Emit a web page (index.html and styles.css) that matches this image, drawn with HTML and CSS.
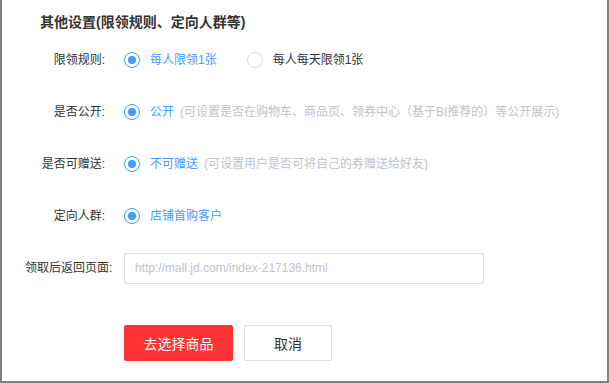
FILE: index.html
```html
<!DOCTYPE html>
<html lang="zh-CN">
<head>
<meta charset="utf-8">
<title>其他设置</title>
<link rel="stylesheet" href="styles.css">
</head>
<body>
<div class="frame">
  <h2 class="title">其他设置(限领规则、定向人群等)</h2>

  <div class="row">
    <div class="label">限领规则:</div>
    <div class="field">
      <span class="opt"><span class="radio on"></span><span class="opt-text on">每人限领1张</span></span>
      <span class="opt opt-next"><span class="radio"></span><span class="opt-text">每人每天限领1张</span></span>
    </div>
  </div>

  <div class="row">
    <div class="label">是否公开:</div>
    <div class="field">
      <span class="opt"><span class="radio on"></span><span class="opt-text on">公开</span></span>
      <span class="hint">(可设置是否在购物车、商品页、领券中心（基于BI推荐的）等公开展示)</span>
    </div>
  </div>

  <div class="row">
    <div class="label">是否可赠送:</div>
    <div class="field">
      <span class="opt"><span class="radio on"></span><span class="opt-text on">不可赠送</span></span>
      <span class="hint">(可设置用户是否可将自己的券赠送给好友)</span>
    </div>
  </div>

  <div class="row">
    <div class="label">定向人群:</div>
    <div class="field">
      <span class="opt"><span class="radio on"></span><span class="opt-text on">店铺首购客户</span></span>
    </div>
  </div>

  <div class="row">
    <div class="label">领取后返回页面:</div>
    <div class="field">
      <input class="input" type="text" placeholder="http://mall.jd.com/index-217136.html">
    </div>
  </div>

  <div class="actions">
    <button class="btn btn-primary" type="button">去选择商品</button>
    <button class="btn btn-default" type="button">取消</button>
  </div>
</div>
</body>
</html>
```

FILE: styles.css
```css
html, body {
  margin: 0;
  padding: 0;
  background: #ffffff;
}

body {
  font-family: "Liberation Sans", "Noto Sans CJK SC", sans-serif;
  font-size: 12px;
  color: #333333;
}

.frame {
  width: 609px;
  height: 383px;
  box-sizing: border-box;
  border-left: 2px solid #808080;
  border-right: 2px solid #808080;
  border-bottom: 2px solid #808080;
  overflow: hidden;
}

.title {
  margin: 12px 0 0 38px;
  font-size: 14px;
  font-weight: bold;
  line-height: 20px;
  color: #333333;
}

.row {
  display: flex;
  align-items: center;
  height: 32px;
  margin-top: 20px;
}

.title + .row {
  margin-top: 12px;
}

.label {
  width: 80px;
  margin-left: 23px;
  margin-right: 19px;
  flex: none;
  text-align: right;
  white-space: nowrap;
  line-height: 20px;
  color: #333333;
}

.field {
  display: flex;
  align-items: center;
  white-space: nowrap;
}

.opt {
  display: inline-flex;
  align-items: center;
}

.opt-next {
  margin-left: 30px;
}

.radio {
  width: 16px;
  height: 16px;
  box-sizing: border-box;
  border: 1px solid #dcdfe6;
  border-radius: 50%;
  position: relative;
  flex: none;
}

.radio.on {
  border-color: #409eff;
}

.radio.on::after {
  content: "";
  position: absolute;
  left: 3px;
  top: 3px;
  width: 8px;
  height: 8px;
  border-radius: 50%;
  background: #409eff;
}

.opt-text {
  margin-left: 10px;
  line-height: 20px;
  color: #333333;
}

.opt-text.on {
  color: #409eff;
}

.hint {
  margin-left: 6px;
  line-height: 20px;
  color: #c0c4cc;
}

.input {
  width: 360px;
  height: 31px;
  box-sizing: border-box;
  border: 1px solid #dcdfe6;
  border-radius: 2px;
  padding: 0 10px;
  font-family: "Liberation Sans", "Noto Sans CJK SC", sans-serif;
  font-size: 12px;
  color: #333333;
  outline: none;
}

.input::placeholder {
  color: #c0c4cc;
}

.actions {
  display: flex;
  gap: 11px;
  margin: 41px 0 0 122px;
}

.btn {
  height: 36px;
  box-sizing: border-box;
  border-radius: 2px;
  font-family: "Liberation Sans", "Noto Sans CJK SC", sans-serif;
  font-size: 14px;
  padding: 0;
  cursor: pointer;
}

.btn-primary {
  width: 109px;
  background: #ff3333;
  border: 1px solid #ff3333;
  color: #ffffff;
}

.btn-default {
  width: 88px;
  background: #ffffff;
  border: 1px solid #dcdfe6;
  color: #333333;
}
```
